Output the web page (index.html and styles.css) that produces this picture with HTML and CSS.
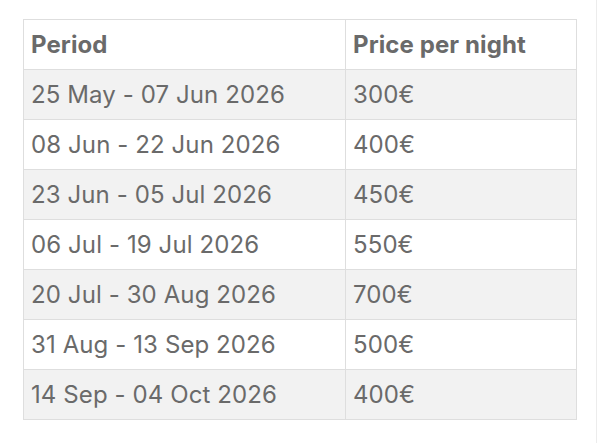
FILE: index.html
```html
<!DOCTYPE html>
<html lang="en">
<head>
<meta charset="utf-8">
<link rel="stylesheet" href="styles.css">
</head>
<body>
<div class="page">
  <table class="prices">
    <colgroup><col class="c1"><col class="c2"></colgroup>
    <thead>
      <tr><th>Period</th><th>Price per night</th></tr>
    </thead>
    <tbody>
      <tr class="alt"><td>25 May - 07 Jun 2026</td><td>300€</td></tr>
      <tr><td>08 Jun - 22 Jun 2026</td><td>400€</td></tr>
      <tr class="alt"><td>23 Jun - 05 Jul 2026</td><td>450€</td></tr>
      <tr><td>06 Jul - 19 Jul 2026</td><td>550€</td></tr>
      <tr class="alt"><td>20 Jul - 30 Aug 2026</td><td>700€</td></tr>
      <tr><td>31 Aug - 13 Sep 2026</td><td>500€</td></tr>
      <tr class="alt"><td>14 Sep - 04 Oct 2026</td><td>400€</td></tr>
    </tbody>
  </table>
</div>
</body>
</html>
```
FILE: styles.css
```css
html, body {
  margin: 0;
  padding: 0;
  background: #ffffff;
}
.page {
  width: 597px;
  height: 443px;
  box-sizing: border-box;
  border-right: 1px solid #ececec;
  padding: 19px 0 0 23px;
}
.prices {
  border-collapse: collapse;
  table-layout: fixed;
  width: 553px;
  font-family: "Inter", "Liberation Sans", sans-serif;
  color: #6a6a6a;
  font-size: 24px;
}
.c1 { width: 322px; }
.c2 { width: 231px; }
.prices tr {
  height: 50px;
}
.prices th, .prices td {
  border: 1px solid #dedede;
  padding: 0 7px;
  text-align: left;
  vertical-align: middle;
  white-space: nowrap;
}
.prices th {
  font-weight: 700;
  letter-spacing: 0.1px;
}
.prices td {
  font-weight: 400;
  letter-spacing: 0.1px;
}
.prices tr.alt td {
  background: #f2f2f2;
}
```
